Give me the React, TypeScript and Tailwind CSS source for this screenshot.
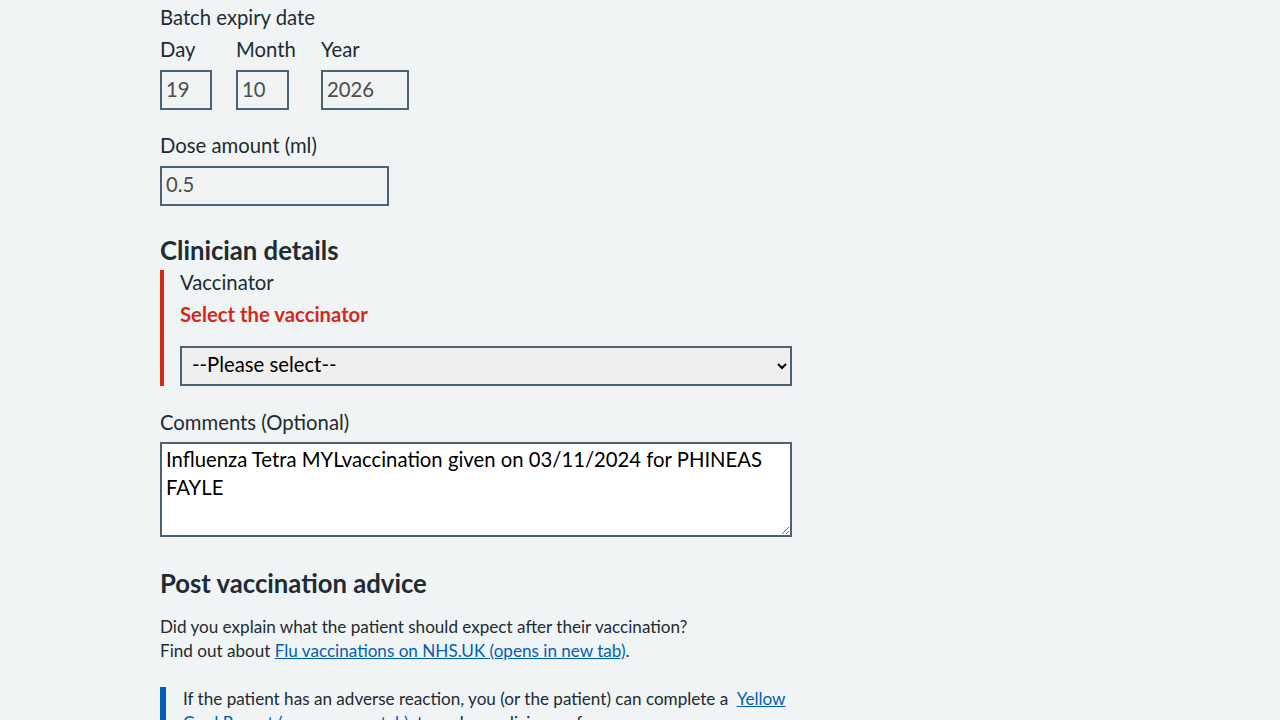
export default function App() {
  const font = { fontFamily: "Lato, 'Noto Sans', sans-serif" };
  return (
    <div className="min-h-screen bg-[#f0f4f5] text-[#212b32]" style={font}>
      <div className="w-[632px] ml-[160px] pt-[3px]">
        {/* Batch expiry */}
        <fieldset>
          <legend className="text-[20.3px] leading-[28px]">Batch expiry date</legend>
          <div className="flex gap-6 mt-[4px]">
            <div className="flex flex-col w-[52px]">
              <label className="text-[20.3px] leading-[28px] mb-[7px]">Day</label>
              <input
                readOnly
                value="19"
                className="w-[52px] h-[40px] border-2 border-[#4c6272] bg-[#f0f4f5] px-[4px] pb-[3px] text-[20.3px] text-[#4d4d4d] outline-none"
              />
            </div>
            <div className="flex flex-col w-[61px]">
              <label className="text-[20.3px] leading-[28px] mb-[7px]">Month</label>
              <input
                readOnly
                value="10"
                className="w-[53px] h-[40px] border-2 border-[#4c6272] bg-[#f0f4f5] px-[4px] pb-[3px] text-[20.3px] text-[#4d4d4d] outline-none"
              />
            </div>
            <div className="flex flex-col">
              <label className="text-[20.3px] leading-[28px] mb-[7px]">Year</label>
              <input
                readOnly
                value="2026"
                className="w-[88px] h-[40px] border-2 border-[#4c6272] bg-[#f0f4f5] px-[4px] pb-[3px] text-[20.3px] text-[#4d4d4d] outline-none"
              />
            </div>
          </div>
        </fieldset>

        {/* Dose */}
        <div className="mt-[21px] flex flex-col">
          <label className="text-[20.3px] leading-[28px] mb-[7px]">Dose amount (ml)</label>
          <input
            readOnly
            value="0.5"
            className="w-[229px] h-[40px] border-2 border-[#4c6272] bg-[#f0f4f5] px-[4px] pb-[4px] text-[20.3px] text-[#4d4d4d] outline-none"
          />
        </div>

        {/* Clinician */}
        <h2 className="mt-[28px] text-[25.7px] leading-[32px] font-bold">Clinician details</h2>
        <div className="mt-[4px] border-l-4 border-[#d5281b] pl-[16px] flex flex-col">
          <label className="text-[20.3px] leading-[24px]">Vaccinator</label>
          <span className="mt-[6px] text-[20.3px] leading-[28px] font-bold text-[#d5281b]">
            Select the vaccinator
          </span>
          <select className="mt-[18px] w-[612px] h-[40px] border-2 border-[#4c6272] bg-[#efefef] px-[6px] pb-[4px] text-[20.3px] text-black">
            <option>--Please select--</option>
          </select>
        </div>

        {/* Comments */}
        <div className="mt-[22px] flex flex-col">
          <label className="text-[20.3px] leading-[28px] mb-[6px]">Comments (Optional)</label>
          <textarea
            readOnly
            value="Influenza Tetra MYLvaccination given on 03/11/2024 for PHINEAS FAYLE"
            className="w-[632px] h-[95px] border-2 border-[#4c6272] bg-white px-[4px] py-[1px] text-[20.3px] leading-[28px] text-black outline-none"
          />
        </div>

        {/* Post vaccination advice */}
        <h2 className="mt-[30px] text-[25.7px] leading-[32px] font-bold">Post vaccination advice</h2>
        <p className="mt-[16px] text-[17.1px] leading-[24px]">
          Did you explain what the patient should expect after their vaccination?
          <br />
          Find out about{" "}
          <a href="#" className="text-[#005eb8] underline">
            Flu vaccinations on NHS.UK (opens in new tab)
          </a>
          .
        </p>
        <div className="mt-[24px] border-l-[6px] border-[#005eb8] pl-[17px] text-[17.1px] leading-[24px]">
          If the patient has an adverse reaction, you (or the patient) can complete a{" "}
          <a href="#" className="ml-[4px] text-[#005eb8] underline">
            Yellow Card Report (opens a new tab)
          </a>
          , to make medicines safer.
        </div>
      </div>
    </div>
  );
}
